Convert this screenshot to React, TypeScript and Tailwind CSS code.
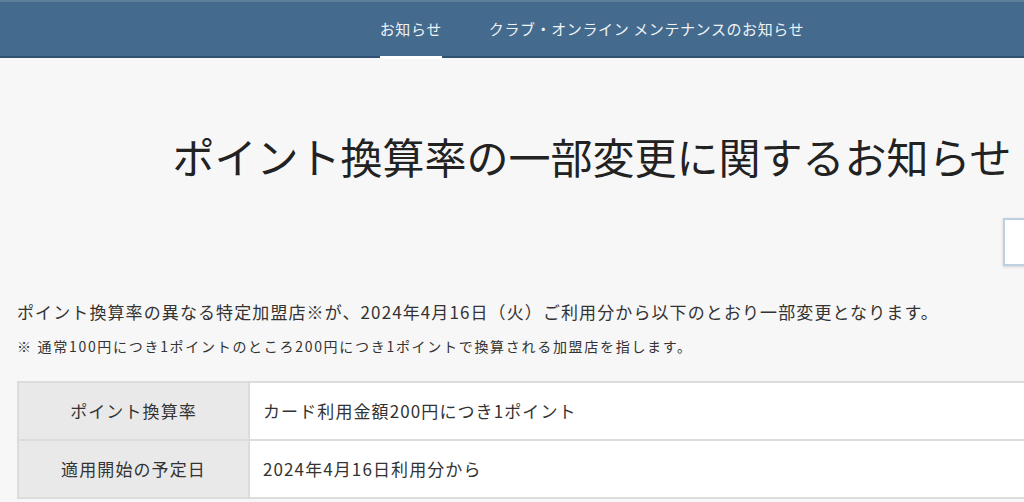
export default function App() {
  return (
    <div
      className="w-[1024px] h-[502px] overflow-hidden bg-[#f7f7f7] text-[#333]"
      style={{ fontFamily: '"Noto Sans CJK JP", "Noto Sans", sans-serif' }}
    >
      <div className="w-[1184px]">
        {/* Header nav */}
        <header className="h-[58px] bg-[#446a8d] border-t-2 border-t-[#5d7f9c] border-b-2 border-b-[#2f5172]">
          <nav className="flex justify-center gap-[47px] h-full text-[15px] tracking-[0.6px] text-[#eef3f8]">
            <a className="relative flex items-center h-full">
              お知らせ
              <span className="absolute left-0 right-0 -bottom-[3px] h-[3px] bg-white" />
            </a>
            <a className="flex items-center h-full">クラブ・オンライン メンテナンスのお知らせ</a>
          </nav>
        </header>

        <main className="px-[17px]">
          <h1 className="pt-[70px] text-center text-[42px] leading-[56px] font-normal text-[#222]">
            ポイント換算率の一部変更に関するお知らせ
          </h1>

          <div className="flex justify-end mt-[34px]">
            <div className="w-[164px] h-[48px] bg-white border-2 border-[#bcd0e2] shadow-[0_1px_3px_rgba(0,0,0,0.15)]" />
          </div>

          <p className="mt-[33px] text-[17px] leading-[26px] tracking-[1.1px]">
            ポイント換算率の異なる特定加盟店※が、2024年4月16日（火）ご利用分から以下のとおり一部変更となります。
          </p>
          <p className="mt-[10px] text-[14px] leading-[22px] tracking-[1.7px]">
            ※ 通常100円につき1ポイントのところ200円につき1ポイントで換算される加盟店を指します。
          </p>

          <table className="mt-[24px] w-full border-collapse text-[17px] tracking-[1.1px]">
            <tbody>
              <tr className="h-[58px]">
                <th className="w-[231px] bg-[#e9e9e9] border-2 border-[#dcdcdc] font-normal text-center">
                  ポイント換算率
                </th>
                <td className="bg-white border-2 border-[#dcdcdc] pl-[13px]">カード利用金額200円につき1ポイント</td>
              </tr>
              <tr className="h-[58px]">
                <th className="w-[231px] bg-[#e9e9e9] border-2 border-[#dcdcdc] font-normal text-center">
                  適用開始の予定日
                </th>
                <td className="bg-white border-2 border-[#dcdcdc] pl-[13px]">2024年4月16日利用分から</td>
              </tr>
            </tbody>
          </table>
        </main>
      </div>
    </div>
  );
}
